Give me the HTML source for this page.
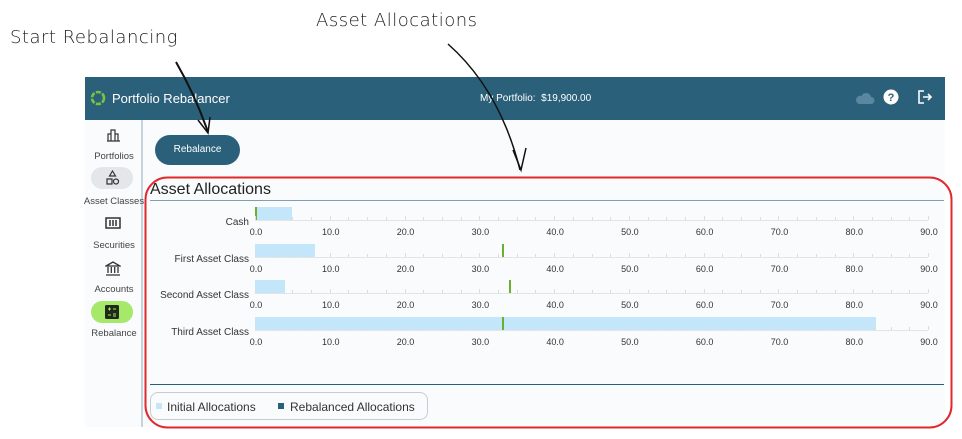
<!DOCTYPE html>
<html><head><meta charset="utf-8">
<style>
*{margin:0;padding:0;box-sizing:border-box}
body{width:962px;height:439px;background:#fff;position:relative;overflow:hidden;font-family:"Liberation Sans",sans-serif}
.hand{position:absolute;font-family:"DejaVu Sans",sans-serif;font-size:18px;color:#222;font-weight:300;letter-spacing:0.5px}
#app{position:absolute;left:85px;top:77px;width:860px;height:350px;background:#f9fbfd}
#hdr{position:absolute;left:0;top:0;width:860px;height:43px;background:#2a6079;color:#fff}
#side{position:absolute;left:0;top:43px;width:58px;height:307px;border-right:2px solid #c6d2dc}
.nav{position:absolute;left:0;width:58px;text-align:center;font-size:9.5px;color:#444}
.pill{position:absolute;left:6px;width:42px;height:22px;border-radius:11px}
.lbl{position:absolute;font-size:10px;color:#333;text-align:right}
.tk{position:absolute;font-size:9px;color:#333;transform:translateX(-50%)}
</style></head><body>
<div class="hand" style="left:10px;top:27px">Start Rebalancing</div>
<div class="hand" style="left:316px;top:10px">Asset Allocations</div>
<div id="app">
 <div id="hdr">
  <svg style="position:absolute;left:5px;top:13px" width="16" height="16" viewBox="0 0 16 16"><circle cx="8" cy="8" r="6" fill="none" stroke="#7cc242" stroke-width="2.6" stroke-dasharray="5 1.5"/></svg>
  <div style="position:absolute;left:27px;top:14px;font-size:13px">Portfolio Rebalancer</div>
  <div style="position:absolute;left:395px;top:16px;font-size:10px">My Portfolio:&nbsp; $19,900.00</div>
  <svg style="position:absolute;left:770px;top:14px" width="20" height="14" viewBox="0 0 20 14"><path d="M4 13h12a3.5 3.5 0 0 0 0-7 5 5 0 0 0-9.5-1A4 4 0 0 0 4 13z" fill="#5a87a0"/></svg>
  <svg style="position:absolute;left:798px;top:12px" width="16" height="16" viewBox="0 0 16 16"><circle cx="8" cy="8" r="7.5" fill="#fff"/><text x="8" y="12" font-size="11" font-weight="bold" text-anchor="middle" fill="#2a6079" font-family="Liberation Sans">?</text></svg>
  <svg style="position:absolute;left:832px;top:12px" width="16" height="16" viewBox="0 0 16 16"><path d="M7 2H2v12h5M6 8h8M11 5l3 3-3 3" fill="none" stroke="#fff" stroke-width="1.6"/></svg>
 </div>
 <div id="side">
  <svg style="position:absolute;left:21px;top:8px" width="15" height="14" viewBox="0 0 15 14"><path d="M1 13h13M2 13V6h3v7M5 13V2h4v11M9 13V6h3v7" fill="none" stroke="#333" stroke-width="1.2"/></svg>
  <div class="nav" style="top:31px">Portfolios</div>
  <div class="pill" style="top:47px;background:#e4e7ea"></div>
  <svg style="position:absolute;left:20px;top:50px" width="15" height="16" viewBox="0 0 15 16"><path d="M7.5 1l3 5h-6z M2 9h5v5H2z" fill="none" stroke="#333" stroke-width="1.2"/><circle cx="11" cy="11.5" r="2.5" fill="none" stroke="#333" stroke-width="1.2"/></svg>
  <div class="nav" style="top:76px;left:-5px;width:68px">Asset Classes</div>
  <svg style="position:absolute;left:20px;top:97px" width="16" height="12" viewBox="0 0 16 12"><rect x="1" y="1" width="14" height="10" fill="none" stroke="#333" stroke-width="1.5"/><path d="M5 3v6M8 3v6M11 3v6" stroke="#333" stroke-width="1.5"/></svg>
  <div class="nav" style="top:120px">Securities</div>
  <svg style="position:absolute;left:20px;top:141px" width="16" height="15" viewBox="0 0 16 15"><path d="M1 5L8 1l7 4zM3 6v6M6.3 6v6M9.7 6v6M13 6v6M1 14h14" fill="none" stroke="#333" stroke-width="1.3"/></svg>
  <div class="nav" style="top:164px">Accounts</div>
  <div class="pill" style="top:181px;background:#a6e86a"></div>
  <svg style="position:absolute;left:20px;top:185px" width="14" height="14" viewBox="0 0 14 14"><rect width="14" height="14" rx="1.5" fill="#1f2a1a"/><path d="M3 4h3M4.5 2.5v3M8 4h3M3 10h3M8 9h3M8 11h3" stroke="#a6e86a" stroke-width="1"/></svg>
  <div class="nav" style="top:208px">Rebalance</div>
 </div>
 <div style="position:absolute;left:70px;top:58px;width:85px;height:30px;border-radius:15px;background:#2a6079;color:#fff;font-size:10px;text-align:center;line-height:30px">Rebalance</div>
 <div style="position:absolute;left:65px;top:104px;font-size:16px;color:#222">Asset Allocations</div>
 <div style="position:absolute;left:65px;top:123px;width:794px;height:1px;background:#7f9fb2"></div>
 <div style="position:absolute;left:65px;top:307px;width:794px;height:1px;background:#2a6079"></div>
 <div style="position:absolute;left:65px;top:315px;width:278px;height:28px;border:1px solid #c8ccd0;border-radius:8px;font-size:12px;color:#333">
  <div style="position:absolute;left:5px;top:10px;width:6px;height:6px;background:#c4e6fb"></div>
  <div style="position:absolute;left:16px;top:7px">Initial Allocations</div>
  <div style="position:absolute;left:127px;top:10px;width:6px;height:6px;background:#2a6079"></div>
  <div style="position:absolute;left:139px;top:7px">Rebalanced Allocations</div>
 </div>
 <div id="chart"></div>
</div>
<svg style="position:absolute;left:0;top:0" width="962" height="439">
 <rect x="145.5" y="177.5" width="806" height="250" rx="22" fill="none" stroke="#e0282d" stroke-width="2"/>
 <path d="M176 62 Q195 95 208 132" fill="none" stroke="#111" stroke-width="2"/>
 <path d="M198 120 L208 133 L210 117" fill="none" stroke="#111" stroke-width="1.5"/>
 <path d="M448 44 Q500 90 520 170" fill="none" stroke="#111" stroke-width="1.5"/>
 <path d="M513 150 L521 170 L526 148" fill="none" stroke="#111" stroke-width="1.5"/>
</svg>
<script>
var c=document.getElementById('chart'),h='';
var rows=[['Cash',143,5,0],['First Asset Class',180,8,33],['Second Asset Class',216,4,34],['Third Asset Class',253,83,33]];
var x0=170,s=7.478;
rows.forEach(function(r){var y=r[1];
 h+='<div style="position:absolute;left:'+x0+'px;top:'+(y-13)+'px;width:'+(r[2]*s)+'px;height:13px;background:#c4e6fb"></div>';
 h+='<div style="position:absolute;left:'+(x0+r[3]*s)+'px;top:'+(y-13)+'px;width:2px;height:13px;background:#6ab02e"></div>';
 h+='<div style="position:absolute;left:'+x0+'px;top:'+y+'px;width:673px;height:1px;background:#e2e4e6"></div>';
 for(var v=0;v<=90;v+=2.5){var big=(v%10==0);h+='<div style="position:absolute;left:'+(x0+v*s)+'px;top:'+(y-(big?4:3))+'px;width:1px;height:'+(big?4:3)+'px;background:#ddd"></div>';}
 for(var v=0;v<=90;v+=10){h+='<div class="tk" style="left:'+(x0+v*s+1)+'px;top:'+(y+7)+'px">'+v.toFixed(1)+'</div>';}
 h+='<div class="lbl" style="right:'+(860-x0+6)+'px;top:'+(y-3)+'px;white-space:nowrap">'+r[0]+'</div>';
});
c.innerHTML=h;
</script>
</body></html>
